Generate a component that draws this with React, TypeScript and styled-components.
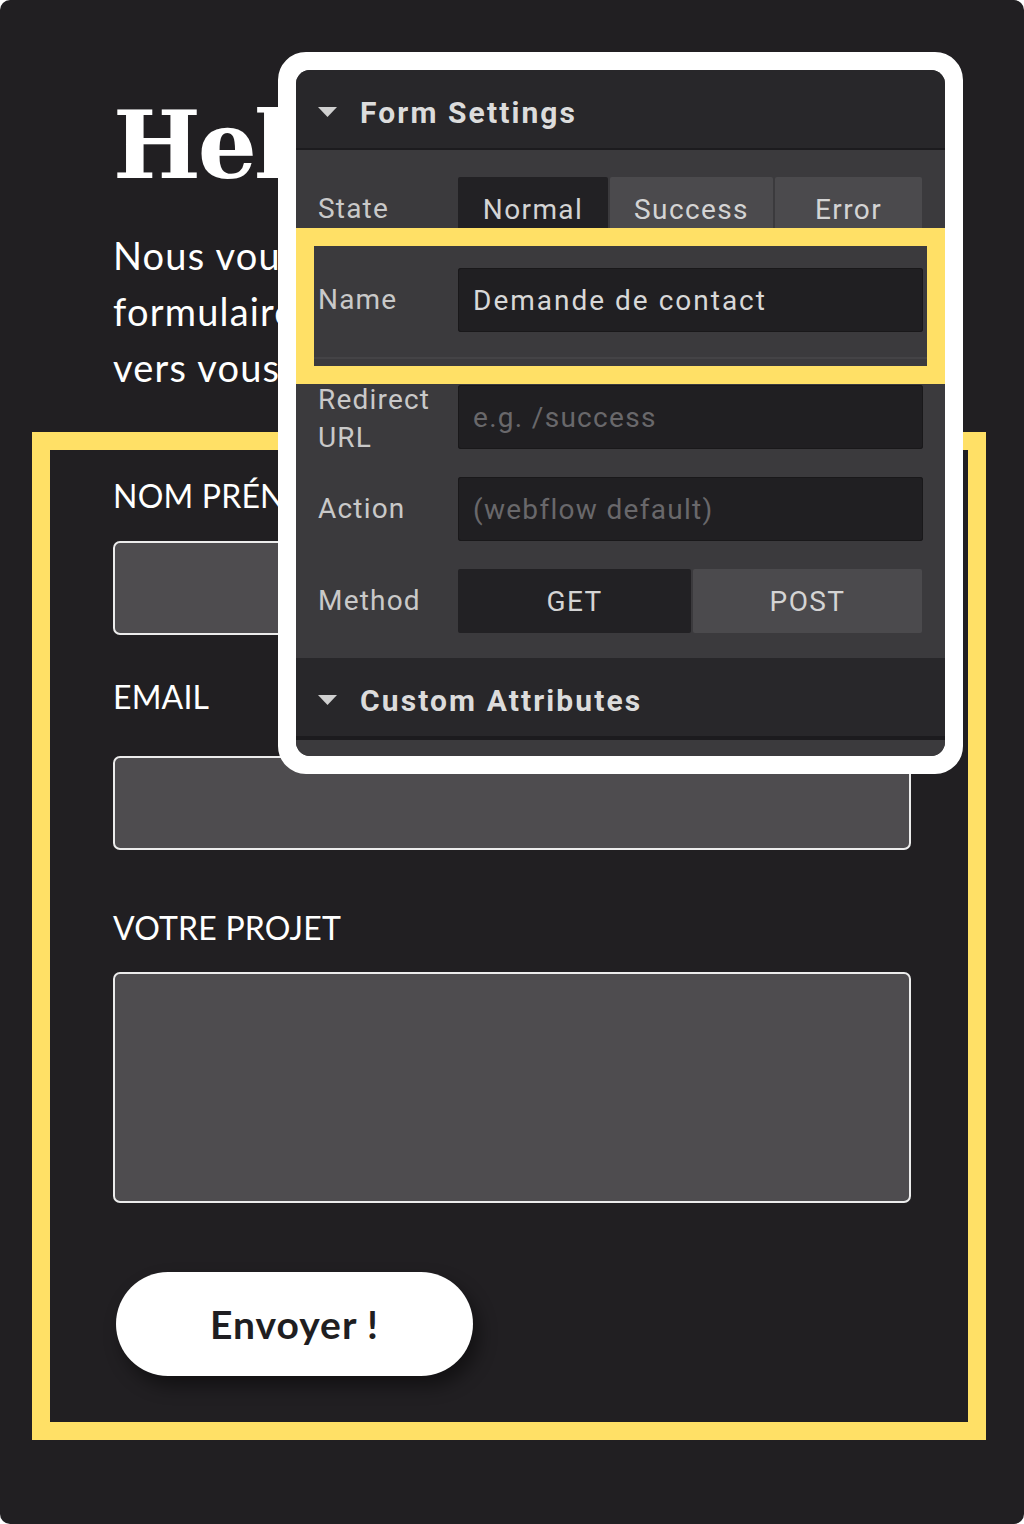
import styled, { createGlobalStyle } from 'styled-components';

const GlobalStyle = createGlobalStyle`
  html, body {
    margin: 0;
    padding: 0;
    background: #ffffff;
  }
  * {
    box-sizing: border-box;
  }
`;

const Card = styled.div`
  position: relative;
  width: 1024px;
  height: 1524px;
  background: #211f22;
  border-radius: 10px;
  padding: 99px 38px 0 32px;
  overflow: hidden;
`;

const Intro = styled.div`
  padding-left: 81px;
`;

const Title = styled.h1`
  margin: 0;
  font-family: 'DejaVu Serif', 'Liberation Serif', serif;
  font-weight: 700;
  font-size: 93px;
  line-height: 1;
  color: #ffffff;
  letter-spacing: -3px;
`;

const Lead = styled.p`
  margin: 35px 0 0;
  font-family: Lato, 'Open Sans', sans-serif;
  font-size: 38px;
  line-height: 56px;
  color: #ffffff;
  letter-spacing: 1.2px;
`;

const Frame = styled.form`
  margin-top: 37px;
  border: 18px solid #ffe066;
  padding: 26px 57px 46px 63px;
  display: flex;
  flex-direction: column;
`;

const Label = styled.label<{ $gap: number; $top?: number }>`
  display: block;
  margin-top: ${(p) => p.$top ?? 0}px;
  margin-bottom: ${(p) => p.$gap}px;
  font-family: Lato, 'Open Sans', sans-serif;
  font-size: 32px;
  line-height: 40px;
  color: #ffffff;
  letter-spacing: 0.2px;
`;

const Field = styled.div<{ $h: number }>`
  height: ${(p) => p.$h}px;
  background: #4e4c4f;
  border: 2px solid #ececec;
  border-radius: 7px;
`;

const Submit = styled.button`
  margin: 69px 0 0 3px;
  width: 357px;
  height: 104px;
  border: none;
  border-radius: 52px;
  background: #ffffff;
  color: #1f1e21;
  font-family: Lato, 'Open Sans', sans-serif;
  font-weight: 700;
  font-size: 39px;
  letter-spacing: 1px;
  box-shadow: 6px 10px 18px rgba(0, 0, 0, 0.45);
  cursor: pointer;
`;

/* webflow settings panel floating above the form */
const Popover = styled.div`
  position: absolute;
  left: 278px;
  top: 52px;
  width: 685px;
  height: 722px;
  border: 18px solid #ffffff;
  border-radius: 28px;
  background: #ffffff;
`;

const Panel = styled.div`
  position: relative;
  height: 100%;
  border-radius: 14px;
  overflow: hidden;
  background: #3b3a3d;
  font-family: Roboto, 'Liberation Sans', sans-serif;
  display: flex;
  flex-direction: column;
`;

const SectionHead = styled.div`
  height: 80px;
  flex-shrink: 0;
  display: flex;
  align-items: center;
  gap: 23px;
  padding: 6px 0 0 22px;
  background: #28272a;
  border-bottom: 2px solid #1c1b1e;
  color: #dcdcdc;
  font-size: 30px;
  font-weight: 700;
  letter-spacing: 2.1px;
`;

const Body = styled.div`
  padding: 27px 22px 25px 22px;
  display: flex;
  flex-direction: column;
`;

const Row = styled.div<{ $gap?: number }>`
  height: 64px;
  display: flex;
  align-items: center;
  margin-top: ${(p) => p.$gap ?? 0}px;
`;

const RowLabel = styled.div<{ $drop?: number }>`
  width: 140px;
  flex-shrink: 0;
  margin-top: ${(p) => p.$drop ?? 0}px;
  color: #c9c9c9;
  font-size: 28px;
  line-height: 38px;
  letter-spacing: 1.2px;
`;

const Input = styled.div<{ $muted?: boolean }>`
  flex: 1;
  height: 64px;
  display: flex;
  align-items: center;
  padding-left: 15px;
  background: #201f22;
  border-radius: 3px;
  box-shadow: inset 0 0 0 1px #19181a;
  color: ${(p) => (p.$muted ? '#69686b' : '#d8d8d8')};
  font-size: 28px;
  letter-spacing: ${(p) => (p.$muted ? 1.3 : 2)}px;
`;

const Segments = styled.div`
  flex: 1;
  height: 64px;
  display: flex;
  gap: 2px;
`;

const Segment = styled.div<{ $active?: boolean; $w: number }>`
  width: ${(p) => p.$w}px;
  flex-shrink: 0;
  display: flex;
  align-items: center;
  justify-content: center;
  background: ${(p) => (p.$active ? '#222124' : '#4b4a4d')};
  border-radius: 2px;
  color: #d4d4d4;
  font-size: 28px;
  letter-spacing: 1.4px;
`;

const Divider = styled.div`
  height: 2px;
  margin: 25px -22px 26px;
  background: #444346;
`;

const Tail = styled.div`
  flex: 1;
  background: #3b3a3d;
  border-top: 2px solid #1c1b1e;
`;

const Highlight = styled.div`
  position: absolute;
  left: 0;
  right: 0;
  top: 158px;
  height: 156px;
  border: 18px solid #ffe066;
  pointer-events: none;
`;

const Caret = () => (
  <svg width="19" height="11" viewBox="0 0 19 11">
    <polygon points="0,0 19,0 9.5,10" fill="#d0d0d0" />
  </svg>
);

const App = () => {
  return (
    <>
      <GlobalStyle />
      <Card>
        <Intro>
          <Title>Hello !</Title>
          <Lead>
            Nous vous répondrons via ce
            <br />
            formulaire de contact et reviendrons
            <br />
            vers vous très rapidement.
          </Lead>
        </Intro>

        <Frame>
          <Label $gap={25}>NOM PRÉNOM</Label>
          <Field $h={94} />
          <Label $top={42} $gap={39}>EMAIL</Label>
          <Field $h={94} />
          <Label $top={58} $gap={24}>VOTRE PROJET</Label>
          <Field $h={231} />
          <Submit type='button'>Envoyer !</Submit>
        </Frame>

        <Popover>
          <Panel>
            <SectionHead>
              <Caret />
              Form Settings
            </SectionHead>
            <Body>
              <Row>
                <RowLabel>State</RowLabel>
                <Segments>
                  <Segment $active $w={150}>Normal</Segment>
                  <Segment $w={163}>Success</Segment>
                  <Segment $w={147}>Error</Segment>
                </Segments>
              </Row>
              <Row $gap={27}>
                <RowLabel>Name</RowLabel>
                <Input>Demande de contact</Input>
              </Row>
              <Divider />
              <Row>
                <RowLabel $drop={4}>
                  Redirect
                  <br />
                  URL
                </RowLabel>
                <Input $muted>e.g. /success</Input>
              </Row>
              <Row $gap={28}>
                <RowLabel>Action</RowLabel>
                <Input $muted>(webflow default)</Input>
              </Row>
              <Row $gap={28}>
                <RowLabel>Method</RowLabel>
                <Segments>
                  <Segment $active $w={233}>GET</Segment>
                  <Segment $w={229}>POST</Segment>
                </Segments>
              </Row>
            </Body>
            <SectionHead>
              <Caret />
              Custom Attributes
            </SectionHead>
            <Tail />
            <Highlight />
          </Panel>
        </Popover>
      </Card>
    </>
  );
};

export default App;
